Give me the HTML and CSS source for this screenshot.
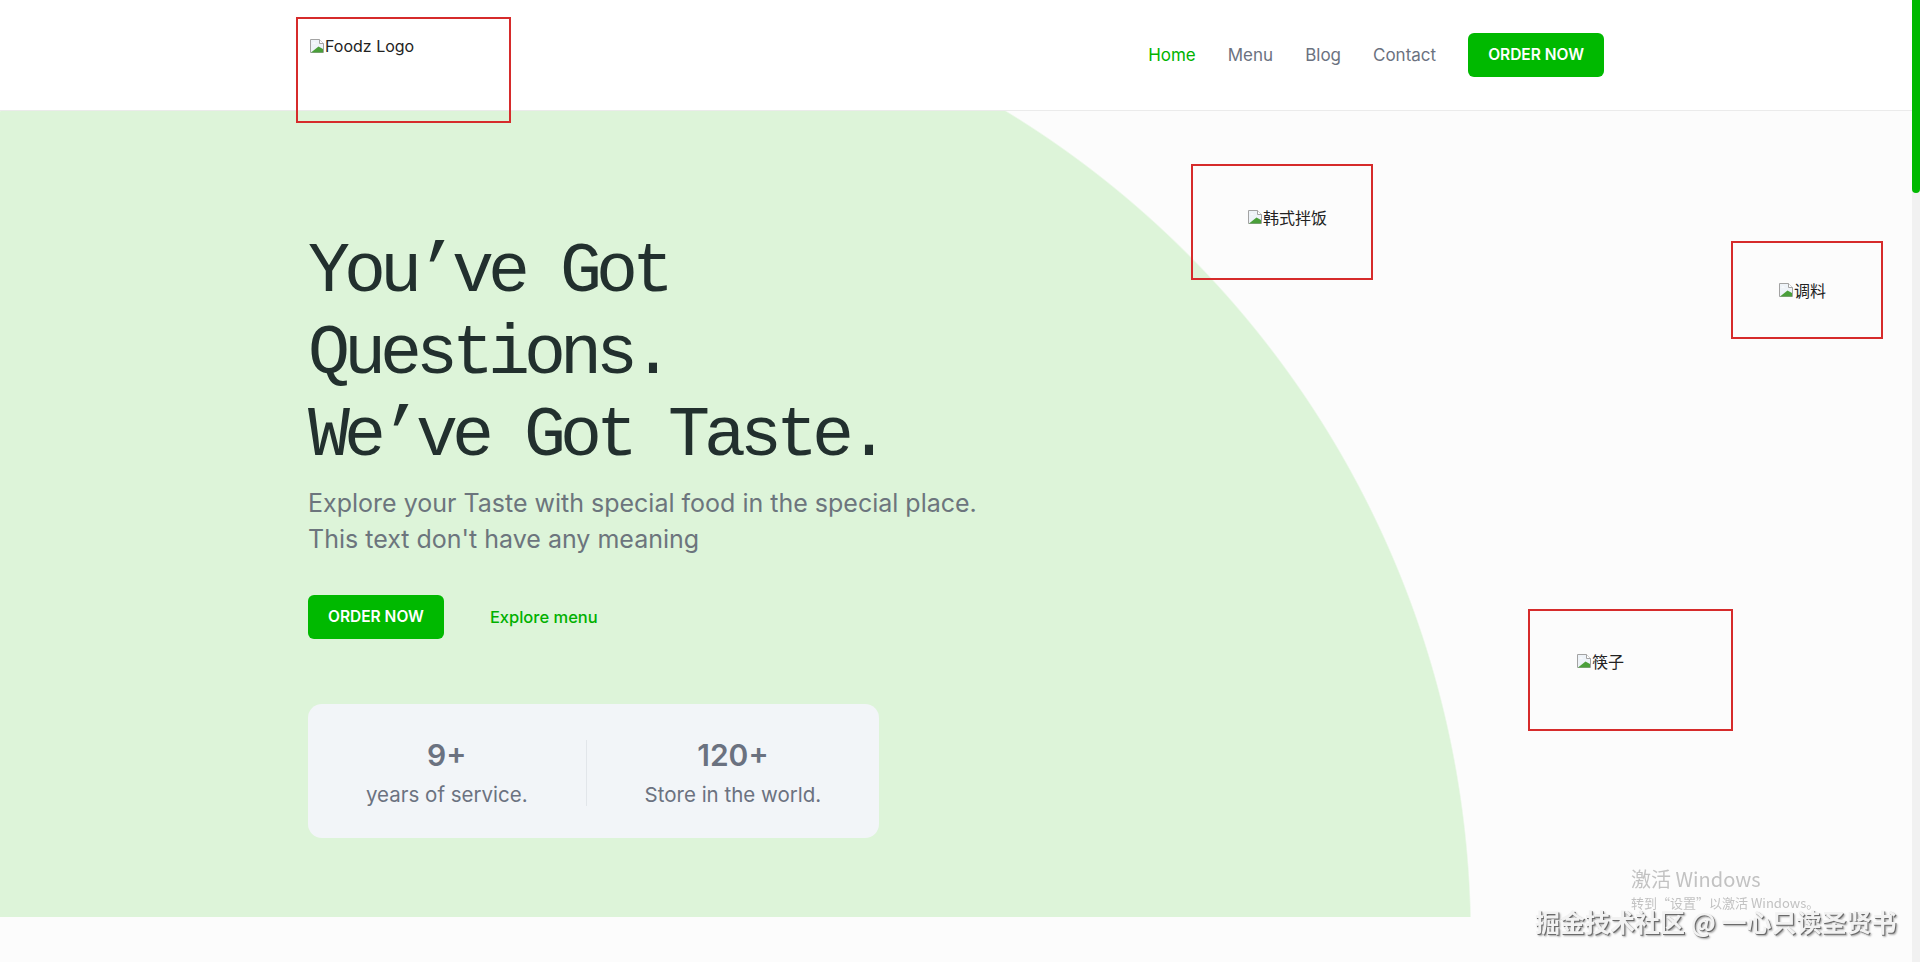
FILE: index.html
```html
<!DOCTYPE html>
<html lang="zh-CN">
<head>
<meta charset="utf-8">
<title>Foodz</title>
<link rel="stylesheet" href="styles.css">
</head>
<body>
<div class="page">
  <header class="site-header">
    <div class="container header-inner">
      <a class="logo-frame" href="#">
        <span class="broken-img"><svg viewBox="0 0 16 16"><path d="M1.5 1.5h9l4 4v9h-13z" fill="#eef3f8" stroke="#a3a3a3"/><path d="M10.5 1.5v4h4" fill="#fff" stroke="#a3a3a3"/><path d="M2 14.5 9.5 8.5 14 11v3.5z" fill="#4a9f3a"/><path d="M3 5.5c1-1.5 3-1.5 4 0z" fill="#fff"/></svg>Foodz Logo</span>
      </a>
      <nav class="main-nav">
        <a class="nav-link active" href="#">Home</a>
        <a class="nav-link" href="#">Menu</a>
        <a class="nav-link" href="#">Blog</a>
        <a class="nav-link" href="#">Contact</a>
        <a class="btn-green" href="#">ORDER NOW</a>
      </nav>
    </div>
  </header>

  <section class="hero">
    <div class="container">
      <div class="hero-copy">
        <h1 class="hero-title">You’ve Got<br>Questions.<br>We’ve Got Taste.</h1>
        <p class="hero-lead">Explore your Taste with special food in the special place.<br>This text don't have any meaning</p>
        <div class="hero-actions">
          <a class="btn-green" href="#">ORDER NOW</a>
          <a class="link-green" href="#">Explore menu</a>
        </div>
        <div class="stats">
          <div class="stat"><strong>9+</strong><span>years of service.</span></div>
          <div class="stat-divider"></div>
          <div class="stat"><strong>120+</strong><span>Store in the world.</span></div>
        </div>
      </div>
    </div>

    <div class="float-img f1"><span class="broken-img cjk"><svg viewBox="0 0 16 16"><path d="M1.5 1.5h9l4 4v9h-13z" fill="#eef3f8" stroke="#a3a3a3"/><path d="M10.5 1.5v4h4" fill="#fff" stroke="#a3a3a3"/><path d="M2 14.5 9.5 8.5 14 11v3.5z" fill="#4a9f3a"/><path d="M3 5.5c1-1.5 3-1.5 4 0z" fill="#fff"/></svg>韩式拌饭</span></div>
    <div class="float-img f2"><span class="broken-img cjk"><svg viewBox="0 0 16 16"><path d="M1.5 1.5h9l4 4v9h-13z" fill="#eef3f8" stroke="#a3a3a3"/><path d="M10.5 1.5v4h4" fill="#fff" stroke="#a3a3a3"/><path d="M2 14.5 9.5 8.5 14 11v3.5z" fill="#4a9f3a"/><path d="M3 5.5c1-1.5 3-1.5 4 0z" fill="#fff"/></svg>调料</span></div>
    <div class="float-img f3"><span class="broken-img cjk"><svg viewBox="0 0 16 16"><path d="M1.5 1.5h9l4 4v9h-13z" fill="#eef3f8" stroke="#a3a3a3"/><path d="M10.5 1.5v4h4" fill="#fff" stroke="#a3a3a3"/><path d="M2 14.5 9.5 8.5 14 11v3.5z" fill="#4a9f3a"/><path d="M3 5.5c1-1.5 3-1.5 4 0z" fill="#fff"/></svg>筷子</span></div>
  </section>

  <section class="next-section"></section>
</div>
<div class="scrollbar"><div class="scrollbar-thumb"></div></div>

<div class="wm-windows"><div class="wm-title">激活 Windows</div><div class="wm-sub">转到“设置”以激活 Windows。</div></div>
<div class="wm-juejin">掘金技术社区 @ 一心只读圣贤书</div>
</body>
</html>
```

FILE: styles.css
```css
* { box-sizing: border-box; margin: 0; padding: 0; }
html, body { height: 100%; overflow: hidden; }
body {
  display: flex;
  background: #fcfcfc;
  font-family: Inter, "Noto Sans CJK SC", sans-serif;
  color: #212529;
}
a { text-decoration: none; }

.page { flex: 1; min-width: 0; display: flex; flex-direction: column; }
.scrollbar { width: 8px; flex: none; background: #f1f1f1; }
.scrollbar-thumb { height: 193px; background: #00b900; border-radius: 0 0 4px 4px; }

.container { width: 100%; max-width: 1320px; margin: 0 auto; padding: 0 12px; }

/* header */
.site-header { background: #fff; border-bottom: 1px solid #ebebeb; height: 111px; flex: none; }
.header-inner { display: flex; align-items: center; justify-content: space-between; height: 110px; }
.logo-frame {
  align-self: flex-start;
  position: relative; z-index: 2;
  margin: 17px 0 0 -12px;
  width: 215px; height: 106px;
  border: 2px solid #d62b2b;
  padding: 17px 0 0 11px;
  color: #222;
}
.broken-img { display: inline-flex; align-items: center; font-size: 16px; line-height: 20px; color: #222; }
.broken-img svg { width: 16px; height: 16px; flex: none; }
.broken-img.cjk { font-family: "Noto Sans CJK SC", sans-serif; }

.main-nav { display: flex; align-items: center; gap: 32px; }
.nav-link { font-size: 17px; line-height: 24px; color: #6b7280; }
.nav-link.active { color: #00b300; }
.btn-green {
  display: inline-block;
  background: #00b900; color: #fff;
  font-size: 15.5px; font-weight: 600; line-height: 22px;
  padding: 11px 20px; border-radius: 6px;
}

/* hero */
.hero {
  position: relative; flex: none;
  min-height: 806px;
  padding: 121px 0 79px;
  background: radial-gradient(circle 968px at 503px 827px, #ddf4d9 967px, #fcfcfc 968.5px);
}
.hero-copy { display: flex; flex-direction: column; align-items: flex-start; }
.hero-title {
  font-family: "Liberation Mono", monospace; font-weight: 400;
  font-size: 70px; line-height: 82px; letter-spacing: -6px;
  color: #22302e;
}
.hero-lead { margin-top: 7px; font-size: 25px; line-height: 36px; color: #6c757d; }
.hero-actions { margin-top: 38px; display: flex; align-items: center; gap: 46px; }
.link-green { color: #00b000; font-size: 16.5px; font-weight: 500; }

.stats { margin-top: 65px; display: flex; background: #f2f5f8; border-radius: 14px; padding: 31px 0 28px; }
.stat { display: flex; flex-direction: column; align-items: center; padding: 0 58px; color: #6b7280; }
.stat strong { font-size: 30px; line-height: 40px; font-weight: 600; }
.stat span { margin-top: 5px; font-size: 20.5px; line-height: 30px; }
.stat-divider { width: 1px; height: 66px; align-self: center; background: #e2e6ea; }

.float-img { position: absolute; border: 2px solid #d62b2b; }
.f1 { left: 1191px; top: 53px; width: 182px; height: 116px; padding: 41px 0 0 54px; }
.f2 { left: 1731px; top: 130px; width: 152px; height: 98px; padding: 37px 0 0 45px; }
.f3 { left: 1528px; top: 498px; width: 205px; height: 122px; padding: 40px 0 0 46px; }

.next-section { flex: 1; background: #fcfcfc; }

/* screenshot watermarks */
.wm-windows { position: fixed; left: 1631px; top: 866px; color: #c2c2c2; font-family: "Noto Sans CJK SC", sans-serif; }
.wm-title { font-size: 20px; line-height: 26px; }
.wm-sub { font-size: 13px; line-height: 18px; margin-top: 2px; }
.wm-juejin {
  position: fixed; left: 1535px; top: 905px;
  font-family: "Noto Sans CJK SC", sans-serif; font-size: 25px; font-weight: 700; line-height: 32px;
  color: #f2f2f2;
  text-shadow: 1px 1px 0 #6a6a6a, 2px 2px 2px rgba(0,0,0,.35);
}
```
